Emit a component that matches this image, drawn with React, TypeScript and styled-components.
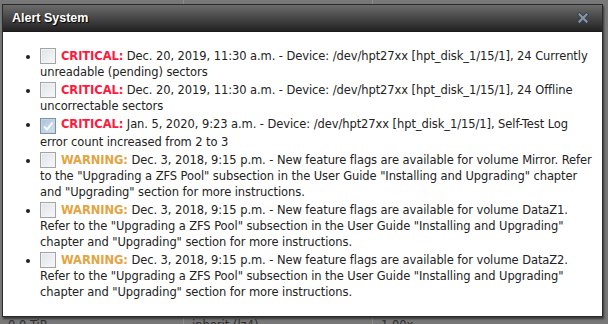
import React from 'react';
import styled, { createGlobalStyle } from 'styled-components';

const GlobalStyle = createGlobalStyle`
  html, body {
    margin: 0;
    padding: 0;
    background: #777;
  }
`;

const Page = styled.div`
  position: relative;
  width: 608px;
  height: 324px;
  overflow: hidden;
  background: #787878;
  font-family: 'DejaVu Sans', Verdana, sans-serif;
`;

const Grid = styled.div`
  display: flex;
  flex-direction: column;
  justify-content: space-between;
  height: 346px;
  margin-top: -12px;
`;

const GridRow = styled.div`
  display: grid;
  grid-template-columns: 183px 189px 1fr;
  height: 16px;
  font-size: 11.5px;
  line-height: 14px;
  color: #2e2e2e;
`;

const GridCell = styled.div`
  padding-left: 8px;
  border-left: 1px solid #8c8c8c;

  &:first-child {
    border-left: none;
  }
`;

const Dialog = styled.div`
  position: absolute;
  left: 2px;
  top: 4px;
  width: 599px;
  height: 311px;
  display: flex;
  flex-direction: column;
  border: 1px solid #2a2a2a;
  box-shadow: 1px 2px 2px rgba(0, 0, 0, 0.55);
  background: #fff;
`;

const TitleBar = styled.div`
  height: 26px;
  display: flex;
  align-items: center;
  justify-content: space-between;
  padding: 0 13px 0 9px;
  background: linear-gradient(#6b6b6b, #4a4a4a 45%, #222 100%);
  border-bottom: 1px solid #1a1a1a;
`;

const Title = styled.span`
  color: #fff;
  font-family: 'Liberation Sans', Arial, sans-serif;
  font-size: 12.5px;
  font-weight: bold;
  text-shadow: 1px 1px 1px #000;
`;

const Close = styled.span`
  display: flex;
  width: 12px;
  height: 12px;
`;

const Body = styled.div`
  flex: 1;
  padding: 15px 8px 0 0;
`;

const List = styled.ul`
  margin: 0;
  padding-left: 37px;
  font-size: 11.5px;
  letter-spacing: -0.08px;
  line-height: 16px;
  color: #222;
`;

const Item = styled.li`
  margin-bottom: 1px;
  padding-top: 1px;
`;

const Box = styled.span<{ $checked?: boolean }>`
  display: inline-flex;
  align-items: center;
  justify-content: center;
  vertical-align: -4px;
  box-sizing: border-box;
  width: 16px;
  height: 16px;
  margin-right: 5px;
  border: 1px solid ${p => (p.$checked ? '#7a93ab' : '#a4a4a4')};
  background: ${p =>
    p.$checked
      ? 'linear-gradient(135deg, #a9c1d8, #d6e3ef)'
      : 'linear-gradient(135deg, #dfe3e8, #f7f8fa)'};
  box-shadow: inset 0 0 0 1px ${p => (p.$checked ? '#c3d4e5' : '#f2f3f5')};
`;

const Level = styled.b<{ $kind: 'critical' | 'warning' }>`
  color: ${p => (p.$kind === 'critical' ? '#ff1a3d' : '#e3a441')};
`;

type Alert = {
  kind: 'critical' | 'warning';
  checked?: boolean;
  text: string;
};

const flags = (vol: string) =>
  `Dec. 3, 2018, 9:15 p.m. - New feature flags are available for volume ${vol}. Refer to the "Upgrading a ZFS Pool" subsection in the User Guide "Installing and Upgrading" chapter and "Upgrading" section for more instructions.`;

const alerts: Alert[] = [
  {
    kind: 'critical',
    text: 'Dec. 20, 2019, 11:30 a.m. - Device: /dev/hpt27xx [hpt_disk_1/15/1], 24 Currently unreadable (pending) sectors',
  },
  {
    kind: 'critical',
    text: 'Dec. 20, 2019, 11:30 a.m. - Device: /dev/hpt27xx [hpt_disk_1/15/1], 24 Offline uncorrectable sectors',
  },
  {
    kind: 'critical',
    checked: true,
    text: 'Jan. 5, 2020, 9:23 a.m. - Device: /dev/hpt27xx [hpt_disk_1/15/1], Self-Test Log error count increased from 2 to 3',
  },
  { kind: 'warning', text: flags('Mirror') },
  { kind: 'warning', text: flags('DataZ1') },
  { kind: 'warning', text: flags('DataZ2') },
];

function CloseIcon() {
  return (
    <svg width="12" height="12" viewBox="0 0 12 12">
      <path d="M2.5 2.5 L9.5 9.5 M9.5 2.5 L2.5 9.5" stroke="#3a424c" strokeWidth="4" strokeLinecap="square" />
      <path d="M2.5 2.5 L9.5 9.5 M9.5 2.5 L2.5 9.5" stroke="#8797a8" strokeWidth="2" strokeLinecap="square" />
    </svg>
  );
}

function Check() {
  return (
    <svg width="12" height="12" viewBox="0 0 12 12">
      <path d="M2 6.5 L5 9.5 L10.5 2.5" fill="none" stroke="#fff" strokeWidth="2" />
    </svg>
  );
}

export default function App() {
  return (
    <>
      <GlobalStyle />
      <Page>
        <Grid>
          <GridRow>
            <GridCell>1 TiB</GridCell>
            <GridCell>inherit (off)</GridCell>
            <GridCell>1.00x</GridCell>
          </GridRow>
          <GridRow>
            <GridCell>0.0 TiB</GridCell>
            <GridCell>inherit (lz4)</GridCell>
            <GridCell>1.00x</GridCell>
          </GridRow>
        </Grid>
        <Dialog>
          <TitleBar>
            <Title>Alert System</Title>
            <Close>
              <CloseIcon />
            </Close>
          </TitleBar>
          <Body>
            <List>
              {alerts.map((a, i) => (
                <Item key={i}>
                  <Box $checked={a.checked}>{a.checked && <Check />}</Box>
                  <Level $kind={a.kind}>{a.kind === 'critical' ? 'CRITICAL:' : 'WARNING:'}</Level>{' '}
                  {a.text}
                </Item>
              ))}
            </List>
          </Body>
        </Dialog>
      </Page>
    </>
  );
}
